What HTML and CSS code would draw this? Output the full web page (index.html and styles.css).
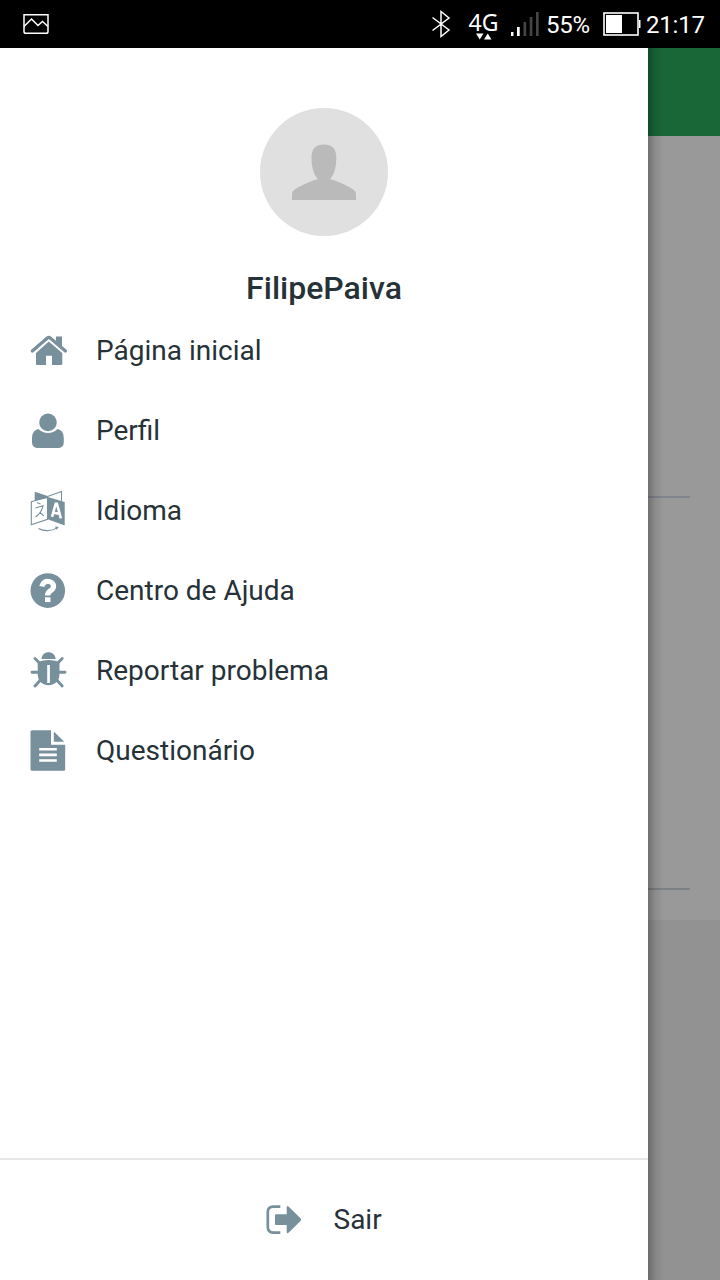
FILE: index.html
```html
<!DOCTYPE html>
<html lang="pt">
<head>
<meta charset="utf-8">
<title>Menu</title>
<link rel="stylesheet" href="styles.css">
</head>
<body>
<header class="status">
  <svg class="status-image" width="28" height="24" viewBox="0 0 28 24" fill="none" stroke="#fff" stroke-width="1.5"><path d="M2 2.800H26V19.500q0 1.800-1.800 1.800H3.800Q2 21.300 2 19.500Z"/><path d="M2 14.500 9.500 7l6.500 6.500L20.500 9.500 26 14.500"/></svg>
  <div class="status-right">
    <svg class="bluetooth" width="22" height="30" viewBox="0 0 22 30" fill="none" stroke="#fff" stroke-width="1.5"><path d="M2.500 8.500 19 21l-8 6.500V2.500L19 9 2.500 21.500"/></svg>
    <div class="network"><span>4G</span><svg width="16" height="7" viewBox="0 0 16 7" fill="#fff"><path d="M0 .5h7.500L3.750 6.500ZM8 6.500h7.500L11.750.5Z"/></svg></div>
    <svg class="signal" width="28" height="26" viewBox="0 0 28 26"><path fill="#fff" d="M0 21h2.500v4H0ZM6 16h2.700v9H6Z"/><path fill="#444" d="M12.500 11h2.700v14h-2.700ZM18.700 6h2.700v19h-2.700ZM25 1h2.700v24H25Z"/></svg>
    <span class="percent">55%</span>
    <svg class="battery" width="38" height="24" viewBox="0 0 38 24"><rect x="1" y="1" width="34" height="22" fill="none" stroke="#fff" stroke-width="1.600"/><path fill="#fff" d="M3 3h16v18H3ZM36 8h1.500v8H36Z"/></svg>
    <span class="clock">21:17</span>
  </div>
</header>
<main class="screen">
  <aside class="drawer">
    <section class="profile">
      <svg class="avatar" width="128" height="128" viewBox="0 0 128 128"><circle cx="64" cy="64" r="64" fill="#e0e0e0"/><path fill="#bababa" d="M64 36.500c8 0 12.300 4.500 12.300 12.500 0 9-1.300 16.500-6.300 22.300 6.500 1.200 17 6.200 22.500 9.700 2.500 1.600 3.500 3 3.500 5.500V92H32v-5.500c0-2.500 1-3.900 3.500-5.500 5.500-3.500 16-8.500 22.500-9.700C53 65.500 51.500 58 51.500 49c0-8 4.500-12.500 12.500-12.500Z"/></svg>
      <h1 class="name">FilipePaiva</h1>
    </section>
    <nav class="menu">
      <a class="item"><svg class="icon" viewBox="0 0 48 48"><path d="M24.800 14.500 38.300 26v11q0 1-1 1H28v-9.300h-6V38h-9q-1 0-1-1V26Z"/><path class="cut-line" d="M8.200 24.300 23.300 11.200q1.400-1.200 2.800 0L41.400 24.300" stroke-width="6"/><path d="M32 14V9.500h6V20"/><path class="line" d="M8.300 24 23.400 11q1.400-1.200 2.800 0L41.400 24" stroke-width="3.300" stroke-linecap="round"/></svg><span>Página inicial</span></a>
      <a class="item"><svg class="icon" viewBox="0 0 48 48"><circle cx="24" cy="15.400" r="8.800"/><path d="M14.500 22c5 5.200 14 5.200 19 0 4.500.8 6.300 4.700 6.300 9.500v3.500c0 3.800-2 6-5.600 6H13.800C10.200 41 8 38.800 8 35v-3.500C8 26.700 10 22.800 14.500 22Z"/></svg><span>Perfil</span></a>
      <a class="item"><svg class="icon" viewBox="0 0 48 48"><path d="M10.700 4.700 23.700 9v2L10.700 14ZM23.700 10 40.700 15v23.500L23.700 32.300Z"/><path class="line" d="M7.300 14.800 23.500 9.700v22.600L7.300 37.800ZM23.500 9.500l14-5v10M11.500 21l7.500-2.300c-1 5-3.800 8.800-7.500 11.300M13 15.500l3.500 1.500M15.700 25l4 3.800M14.500 41.500c5 2.900 13.500 2.900 18.500-.6" stroke-width="1.100"/><path d="m31 39.500 3.800.5-2.300 2.800Z"/><path class="cut-line" d="m28 29.800 3.700-13h1.200l4 14.500M29.300 25.800l6 1" stroke-width="2.600"/></svg><span>Idioma</span></a>
      <a class="item"><svg class="icon" viewBox="0 0 48 48"><circle cx="23.800" cy="23.600" r="17.300"/><path class="cut-line" d="M17.800 19.500c.8-4.300 4-5.600 7.200-5 4.600.8 6 5.400 2.800 8.200-2.500 2-4.300 2.700-4.300 5.800" stroke-width="5.200"/><path class="cut" d="M21 30.300h5.500v4.800H21Z"/></svg><span>Centro de Ajuda</span></a>
      <a class="item"><svg class="icon" viewBox="0 0 48 48"><path d="M17.500 12c.5-4.500 3.200-6.800 7-6.800s6.700 2.300 7.200 6.800ZM13.700 15q5.500-2 10.900-2t10.900 2v12c0 6.500-4 11.200-10.900 11.200S13.700 33.500 13.700 27Z"/><path class="line" d="m11 11.500 5 5M38.200 11.500l-5 5M8 25.300h7M34 25.300h7M16 33.500 11 39M33.200 33.500l5 5.500" stroke-width="2.900" stroke-linecap="round"/><path class="cut" d="M23.200 18h2.700v18h-2.700Z"/></svg><span>Reportar problema</span></a>
      <a class="item"><svg class="icon" viewBox="0 0 48 48"><path d="M8 3.300H27v14.500h14.200v24.500q0 1.500-1.500 1.500H8Q6.500 43.800 6.500 42.300V4.800Q6.500 3.300 8 3.300ZM29.800 4.500v10.300h10.400Z"/><path class="cut" d="M15.200 21h17.600v2.600H15.200ZM15.200 26.600h17.600v2.600H15.200ZM15.200 32.200h17.600v2.600H15.200Z"/></svg><span>Questionário</span></a>
    </nav>
    <footer class="logout"><svg class="icon" viewBox="0 0 48 48"><path class="line" d="M20.300 10.600h-7q-5.500 0-5.500 5.500v15q0 5.500 5.500 5.500h7" stroke-width="2.700"/><path d="M16 18.300h10.700v-7q.2-2 1.800-.8l12 11.800q1.300 1.300 0 2.600l-12 11.800q-1.600 1.200-1.800-.8V29H16q-1 0-1-1v-8.700q0-1 1-1Z"/></svg><span>Sair</span></footer>
  </aside>
  <div class="backdrop">
    <div class="toolbar"></div>
    <div class="section first"></div>
    <div class="section second"></div>
    <div class="section third"></div>
  </div>
</main>
</body>
</html>
```
FILE: styles.css
```css
* { box-sizing: border-box; }
body {
  margin: 0;
  width: 720px;
  height: 1280px;
  display: flex;
  flex-direction: column;
  overflow: hidden;
  font-family: Roboto, "Noto Sans", sans-serif;
  color: #263238;
}
.status {
  height: 48px;
  flex: none;
  display: flex;
  align-items: center;
  justify-content: space-between;
  padding: 0 14px 0 22px;
  background: #000;
  color: #fff;
  font-size: 24px;
  line-height: 48px;
}
.status-right { display: flex; align-items: center; height: 48px; }
.bluetooth { margin-right: 16px; }
.network {
  width: 31px;
  display: flex;
  flex-direction: column;
  align-items: center;
  font: 23px/23px "Noto Sans", sans-serif;
  padding-top: 2px;
}
.network svg { margin-top: -1px; }
.signal { margin: 0 7px 0 12px; }
.percent { width: 57px; letter-spacing: -.3px; padding-top: 2px; }
.battery { margin-right: 5px; }
.clock { width: 60px; padding-top: 2px; white-space: nowrap; letter-spacing: -.2px; }
.screen { flex: 1; display: flex; }
.drawer { width: 648px; display: flex; flex-direction: column; background: #fff; }
.profile {
  height: 263px;
  padding-top: 60px;
  display: flex;
  flex-direction: column;
  align-items: center;
}
.avatar { flex: none; }
.name { margin: 32px 0 0; font-size: 32px; line-height: 40px; font-weight: 500; }
.menu { display: flex; flex-direction: column; }
.item {
  height: 80px;
  display: flex;
  align-items: center;
  gap: 24px;
  padding-left: 24px;
  font-size: 28px;
}
.item span, .logout span { padding-bottom: 2px; }
.icon { width: 48px; height: 48px; fill: #78909c; flex: none; }
.line { fill: none; stroke: #78909c; }
.cut { fill: #fff; }
.cut-line { fill: none; stroke: #fff; }
.logout {
  margin-top: auto;
  height: 122px;
  border-top: 2px solid #e5e5e5;
  display: flex;
  align-items: center;
  gap: 25.5px;
  padding-left: 260px;
  font-size: 28px;
}
.backdrop {
  width: 72px;
  display: flex;
  flex-direction: column;
  position: relative;
  background: #929292;
}
.backdrop::after {
  content: "";
  position: absolute;
  inset: 0 auto 0 0;
  width: 16px;
  background: linear-gradient(90deg, rgba(0,0,0,.27), rgba(0,0,0,.09) 45%, transparent);
}
.toolbar { height: 88px; background: #196737; }
.section { background: #999; }
.section::after {
  content: "";
  display: block;
  width: 42px;
  height: 2px;
  background: #7d8184;
}
.first { height: 362px; padding-top: 360px; }
.first::after { background: #82848d; }
.second { height: 392px; padding-top: 390px; }
.third { height: 30px; }
.third::after { display: none; }
```
